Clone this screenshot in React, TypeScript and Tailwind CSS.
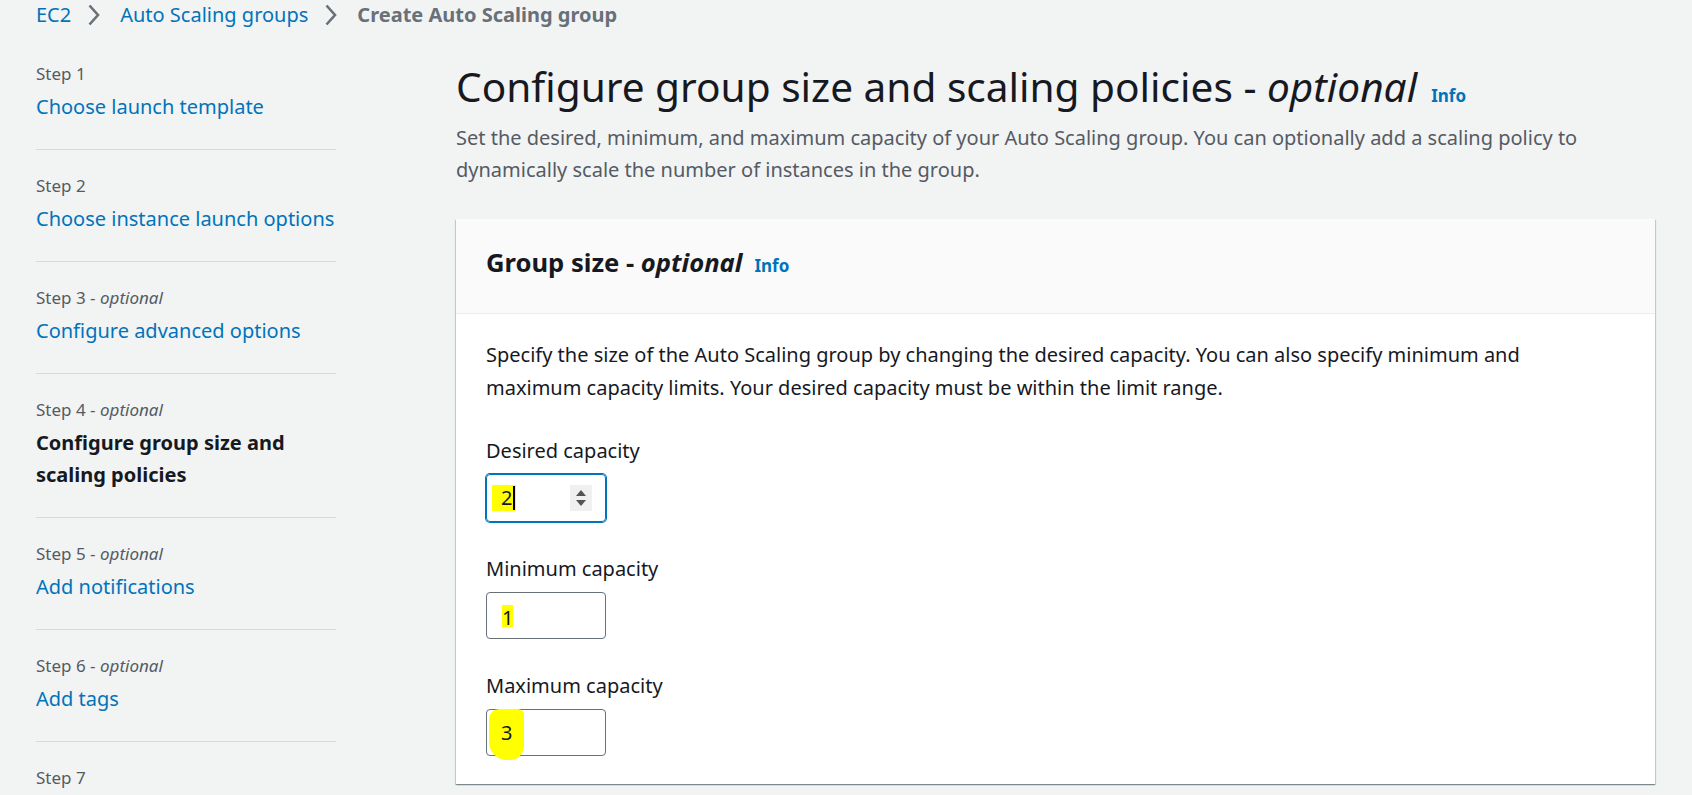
const steps = [
  { label: "Step 1", optional: false, title: "Choose launch template", current: false },
  { label: "Step 2", optional: false, title: "Choose instance launch options", current: false },
  { label: "Step 3", optional: true, title: "Configure advanced options", current: false },
  { label: "Step 4", optional: true, title: "Configure group size and scaling policies", current: true },
  { label: "Step 5", optional: true, title: "Add notifications", current: false },
  { label: "Step 6", optional: true, title: "Add tags", current: false },
  { label: "Step 7", optional: false, title: "Review", current: false },
];

function Crumb() {
  return (
    <svg width="14" height="22" viewBox="0 0 14 22" fill="none" stroke="#687078" strokeWidth="2.6" strokeLinejoin="miter">
      <path d="M2.5 1.5 L11 11 L2.5 20.5" />
    </svg>
  );
}

function Spinner() {
  return (
    <div className="flex h-[26px] w-[22px] flex-col items-center justify-center gap-[4px] bg-[#f0f0f0]">
      <svg width="10" height="6" viewBox="0 0 10 6"><path d="M5 0 L10 6 L0 6 Z" fill="#545454" /></svg>
      <svg width="10" height="6" viewBox="0 0 10 6"><path d="M0 0 L10 0 L5 6 Z" fill="#545454" /></svg>
    </div>
  );
}

export default function App() {
  return (
    <div className="h-[795px] w-full overflow-hidden bg-[#f2f3f3] font-['Noto_Sans',sans-serif] text-[#16191f]">
      {/* breadcrumb */}
      <div className="flex h-[30px] items-center pl-[36px] text-[20px] leading-[30px]">
        <span className="text-[#0073bb]">EC2</span>
        <span className="ml-[16px] mr-[19px] flex items-center"><Crumb /></span>
        <span className="text-[#0073bb]">Auto Scaling groups</span>
        <span className="ml-[16px] mr-[19px] flex items-center"><Crumb /></span>
        <span className="font-bold text-[#687078]">Create Auto Scaling group</span>
      </div>

      <div className="mt-[8px] flex">
        {/* step nav */}
        <nav className="ml-[36px] w-[300px] shrink-0">
          {steps.map((s) => (
            <div key={s.label} className="border-b border-[#d5dbdb] pt-[24px] pb-[26px]">
              <div className="text-[17px] leading-[24px] text-[#545b64]">
                {s.label}
                {s.optional && <span> - <i>optional</i></span>}
              </div>
              <div className={"mt-[5px] text-[20px] leading-[32px] " + (s.current ? "font-bold text-[#16191f]" : "text-[#0073bb]")}>
                {s.title}
              </div>
            </div>
          ))}
        </nav>

        {/* main */}
        <main className="ml-[120px] mr-[37px] flex-1">
          <div className="mt-[25px] flex items-baseline">
            <h1 className="text-[40.6px] leading-[48px] font-normal">
              Configure group size and scaling policies - <i>optional</i>
            </h1>
            <span className="ml-[14px] text-[17px] font-bold text-[#0073bb]">Info</span>
          </div>
          <p className="mt-[11px] text-[20px] leading-[32px] text-[#545b64]">
            Set the desired, minimum, and maximum capacity of your Auto Scaling group. You can optionally add a scaling policy to dynamically scale the number of instances in the group.
          </p>

          <section className="mt-[33px] bg-white shadow-[0_1px_1px_0_rgba(0,28,36,0.3),1px_1px_1px_0_rgba(0,28,36,0.15),-1px_1px_1px_0_rgba(0,28,36,0.15)]">
            <div className="flex h-[95px] items-baseline border-b border-[#eaeded] bg-[#fafafa] px-[30px] pt-[28px]">
              <h2 className="text-[25.6px] leading-[32px] font-bold">
                Group size - <i>optional</i>
              </h2>
              <span className="ml-[12px] text-[17px] font-bold text-[#0073bb]">Info</span>
            </div>

            <div className="px-[30px] pt-[24px] pb-[28px]">
              <p className="pr-[60px] text-[20px] leading-[33px]">
                Specify the size of the Auto Scaling group by changing the desired capacity. You can also specify minimum and maximum capacity limits. Your desired capacity must be within the limit range.
              </p>

              <div className="mt-[32px]">
                <div className="text-[20px] leading-[30px]">Desired capacity</div>
                <div className="mt-[8px] flex h-[48px] w-[120px] items-center justify-between rounded-[4px] border border-[#0073bb] pl-[5px] pr-[13px] ring-1 ring-[#0073bb]">
                  <span className="flex h-[26px] items-center bg-[#ffff00] pl-[9px] pr-[1px] text-[20px]">
                    2<span className="ml-[1px] h-[24px] w-[2px] bg-black" />
                  </span>
                  <Spinner />
                </div>
              </div>

              <div className="mt-[32px]">
                <div className="text-[20px] leading-[30px]">Minimum capacity</div>
                <div className="mt-[8px] flex h-[47px] w-[120px] items-center rounded-[4px] border border-[#687078] pl-[15px]">
                  <span className="flex h-[22px] items-center bg-[#ffff00] pt-[4px] text-[20px] leading-none">1</span>
                </div>
              </div>

              <div className="mt-[32px]">
                <div className="text-[20px] leading-[30px]">Maximum capacity</div>
                <div className="relative mt-[8px] flex h-[47px] w-[120px] items-center rounded-[4px] border border-[#687078] pl-[14px]">
                  <span className="absolute left-[2px] top-[-1px] h-[51px] w-[35px] rounded-[10px_6px_14px_18px] bg-[#ffff00]" />
                  <span className="relative text-[20px]">3</span>
                </div>
              </div>
            </div>
          </section>
        </main>
      </div>
    </div>
  );
}
